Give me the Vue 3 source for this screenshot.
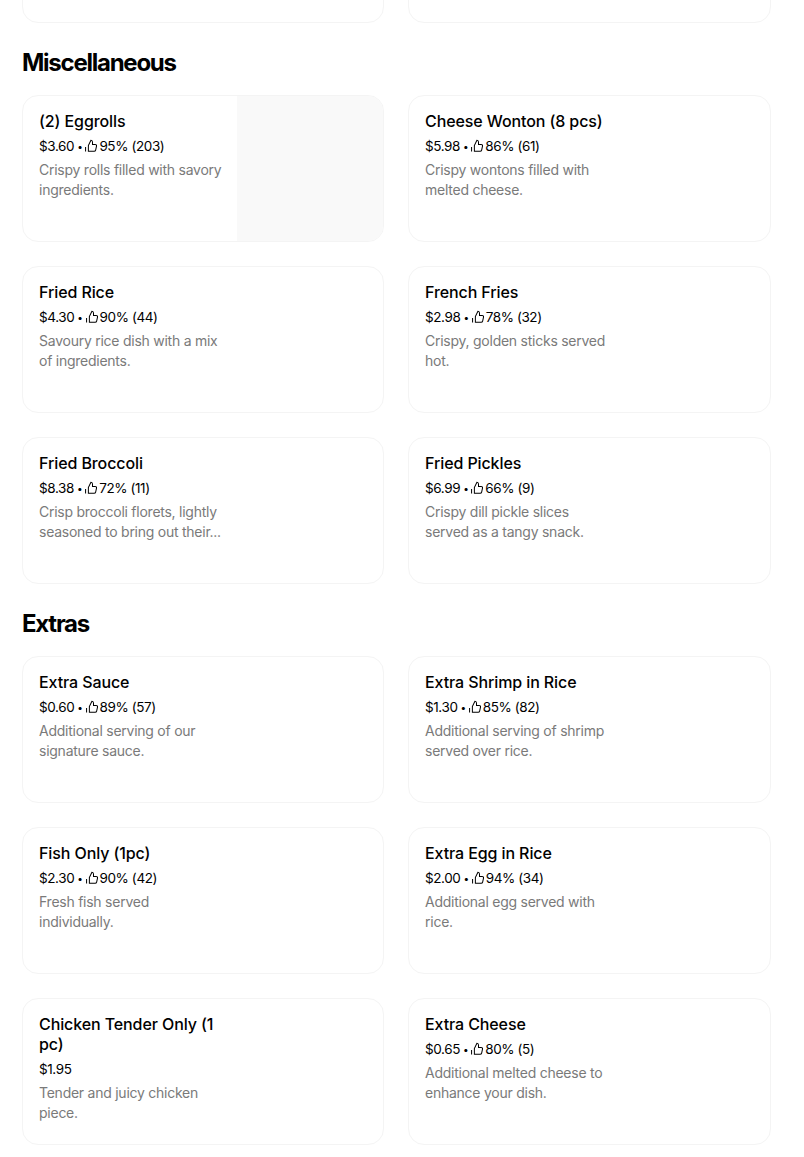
<template>
  <div class="menu-page">
    <div class="item-grid cut-off">
      <div class="menu-card"></div>
      <div class="menu-card"></div>
    </div>

    <section v-for="section in sections" :key="section.title" class="menu-section">
      <h2>{{ section.title }}</h2>
      <div class="item-grid">
        <div v-for="item in section.items" :key="item.name" class="menu-card">
          <div class="card-text">
            <div class="item-name">{{ item.name }}</div>
            <div class="item-meta">
              <span>{{ item.price }}</span>
              <template v-if="item.rating">
                <span class="dot">•</span>
                <svg class="thumb" viewBox="0 0 16 16" fill="none" stroke="currentColor" stroke-width="1.15">
                  <path d="M5 7.4 7.9 1.4c1.1.1 1.8.9 1.8 2v2.8h3.1c1 0 1.7.9 1.5 1.9l-1 4.6c-.2.9-.9 1.4-1.7 1.4H5V7.4Z" />
                  <path d="M1.8 9v5.4" />
                </svg>
                <span>{{ item.rating }}</span>
              </template>
            </div>
            <div class="item-desc">{{ item.desc }}</div>
          </div>
          <div v-if="item.photo" class="item-photo"></div>
        </div>
      </div>
    </section>
  </div>
</template>

<script setup>
const sections = [
  {
    title: "Miscellaneous",
    items: [
      { name: "(2) Eggrolls", price: "$3.60", rating: "95% (203)", desc: "Crispy rolls filled with savory ingredients.", photo: true },
      { name: "Cheese Wonton (8 pcs)", price: "$5.98", rating: "86% (61)", desc: "Crispy wontons filled with melted cheese." },
      { name: "Fried Rice", price: "$4.30", rating: "90% (44)", desc: "Savoury rice dish with a mix of ingredients." },
      { name: "French Fries", price: "$2.98", rating: "78% (32)", desc: "Crispy, golden sticks served hot." },
      { name: "Fried Broccoli", price: "$8.38", rating: "72% (11)", desc: "Crisp broccoli florets, lightly seasoned to bring out their..." },
      { name: "Fried Pickles", price: "$6.99", rating: "66% (9)", desc: "Crispy dill pickle slices served as a tangy snack." },
    ],
  },
  {
    title: "Extras",
    items: [
      { name: "Extra Sauce", price: "$0.60", rating: "89% (57)", desc: "Additional serving of our signature sauce." },
      { name: "Extra Shrimp in Rice", price: "$1.30", rating: "85% (82)", desc: "Additional serving of shrimp served over rice." },
      { name: "Fish Only (1pc)", price: "$2.30", rating: "90% (42)", desc: "Fresh fish served individually." },
      { name: "Extra Egg in Rice", price: "$2.00", rating: "94% (34)", desc: "Additional egg served with rice." },
      { name: "Chicken Tender Only (1 pc)", price: "$1.95", desc: "Tender and juicy chicken piece." },
      { name: "Extra Cheese", price: "$0.65", rating: "80% (5)", desc: "Additional melted cheese to enhance your dish." },
    ],
  },
];
</script>

<style>
body {
  background: #fff;
  overflow: hidden;
}
</style>

<style scoped>
.menu-page {
  height: 1157px;
  overflow: hidden;
  padding: 0 33px 0 22px;
  font-family: Inter, "Liberation Sans", sans-serif;
  color: #000;
}

.cut-off {
  margin-top: -124px;
}

.item-grid {
  display: grid;
  grid-template-columns: 362px 363px;
  gap: 24px;
}

.menu-section h2 {
  margin: 24px 0 16px;
  height: 32px;
  font-size: 24px;
  line-height: 32px;
  font-weight: 700;
  letter-spacing: -1.25px;
}

.menu-card {
  display: flex;
  justify-content: space-between;
  box-sizing: border-box;
  height: 147px;
  border: 1px solid #f4f4f4;
  border-radius: 16px;
  overflow: hidden;
}

.card-text {
  width: 186px;
  padding: 15px 0 0 16px;
}

.item-name {
  font-size: 16px;
  line-height: 20px;
  font-weight: 500;
  letter-spacing: -0.1px;
}

.item-meta {
  display: flex;
  align-items: center;
  margin-top: 5px;
  font-size: 13.5px;
  line-height: 20px;
  letter-spacing: -0.4px;
  color: #000;
}

.dot {
  margin: 0 2px 0 3px;
  font-size: 10px;
}

.thumb {
  width: 14px;
  height: 14px;
  margin-right: 1px;
}

.item-desc {
  margin-top: 4px;
  font-size: 14px;
  line-height: 20px;
  letter-spacing: -0.25px;
  color: #7a7a7a;
}

.item-photo {
  width: 146px;
  background: #f9f9f9;
}
</style>
